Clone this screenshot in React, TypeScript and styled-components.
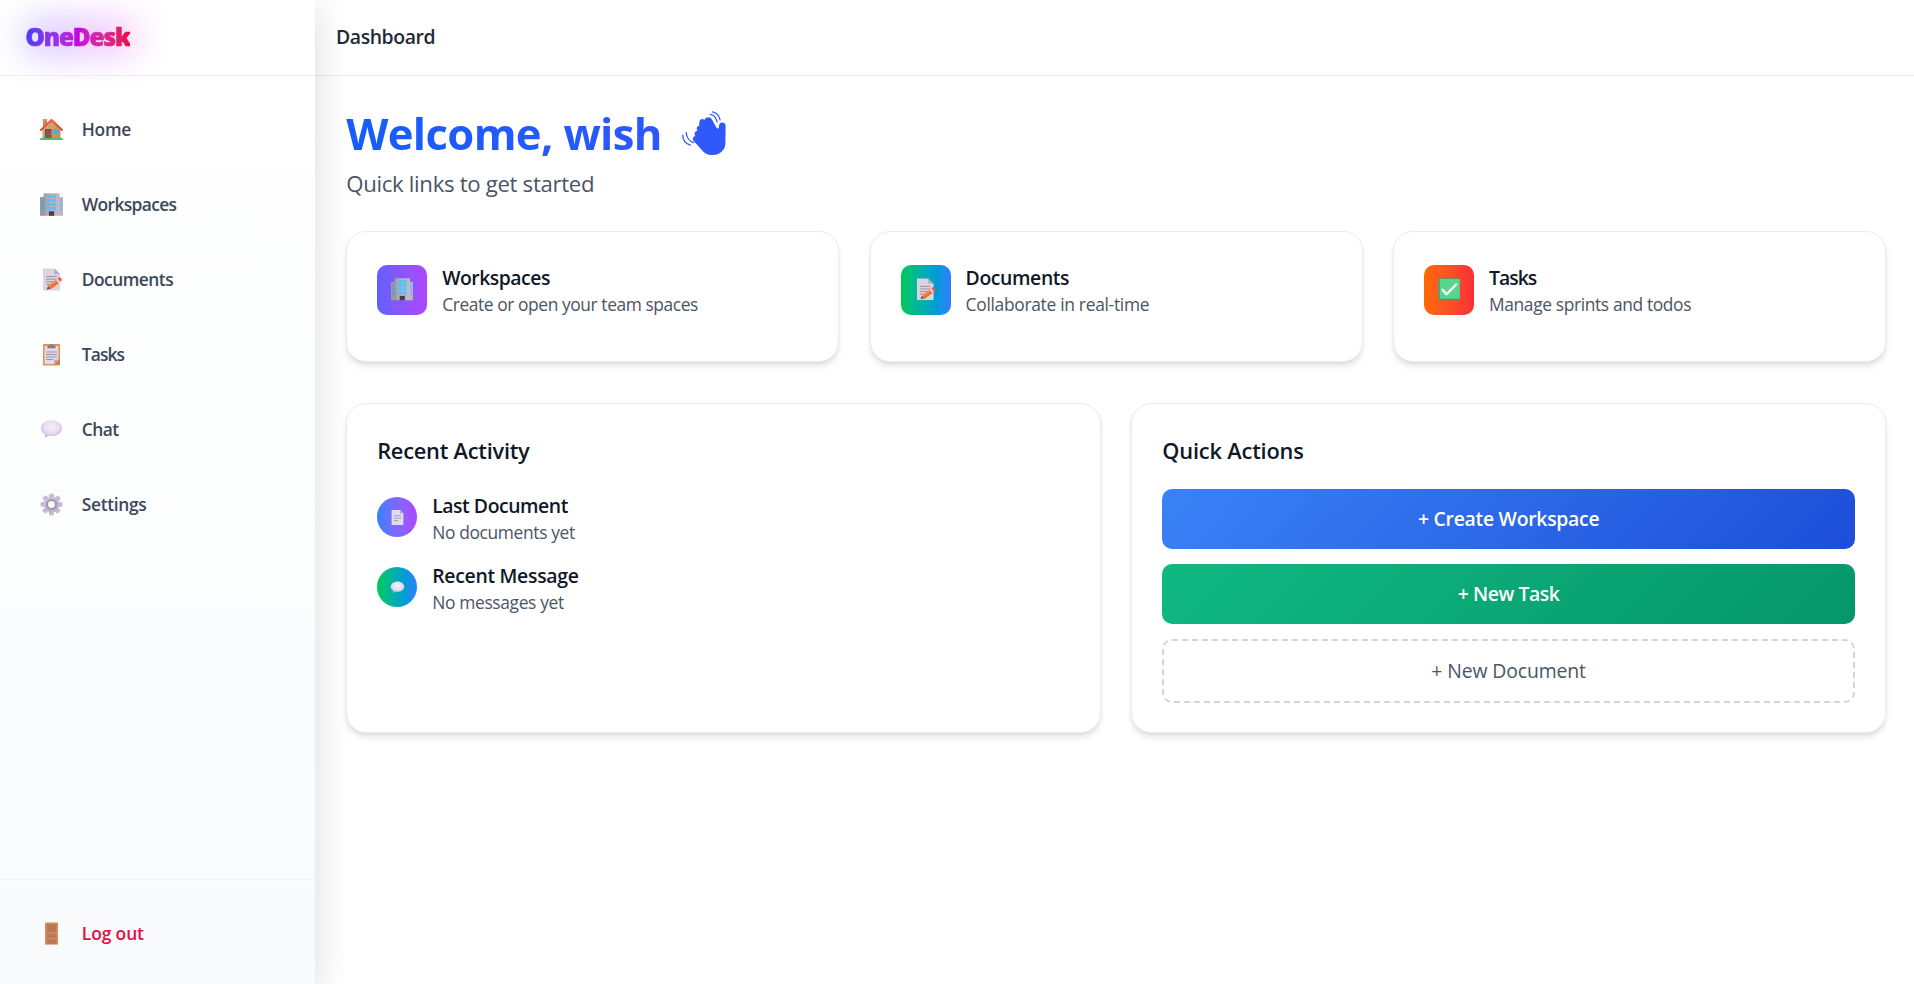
import React from 'react';
import styled, { createGlobalStyle } from 'styled-components';

const GlobalStyle = createGlobalStyle`
  *, *::before, *::after { box-sizing: border-box; }
  html, body { margin: 0; background: #fff; overflow: hidden; }
  body {
    font-family: "Open Sans", "Noto Sans", sans-serif;
    color: #101828;
    -webkit-font-smoothing: antialiased;
  }
  h1, h2, h3, p { margin: 0; }
  button { font-family: inherit; }
`;

/* ---------- layout ---------- */

const Shell = styled.div`
  display: flex;
  height: 984px;
  background: #fff;
`;

const Sidebar = styled.aside`
  position: relative;
  z-index: 2;
  display: flex;
  flex-direction: column;
  flex: 0 0 315px;
  background: linear-gradient(180deg, #ffffff 0%, #fcfdfd 50%, #f8fafc 100%);
  box-shadow: 0 8px 34px rgba(0, 0, 0, 0.15);
`;

const Brand = styled.div`
  display: flex;
  align-items: center;
  height: 76px;
  padding: 0 0 2px 25.5px;
  border-bottom: 1px solid #f0f1f3;
`;

const Logo = styled.div`
  position: relative;
  isolation: isolate;

  &::before {
    content: '';
    position: absolute;
    z-index: -1;
    inset: -2px -10px -2px -4px;
    border-radius: 20px;
    background: linear-gradient(90deg, #6d5cff, #a65cff 45%, #e85cf5 85%, #ff5cd8);
    filter: blur(17px);
    opacity: 0.32;
  }
`;

const LogoText = styled.span`
  display: block;
  font-size: 24.3px;
  font-weight: 800;
  line-height: 34px;
  letter-spacing: -1.1px;
  color: transparent;
  -webkit-text-stroke: 0.7px transparent;
  background: linear-gradient(to right in oklab, #4f39f6, #c800de 50%, #ec003f);
  background-clip: text;
  -webkit-background-clip: text;
`;

const Nav = styled.nav`
  display: flex;
  flex: 1;
  flex-direction: column;
  gap: 15px;
  padding-top: 23.2px;
`;

const NavItem = styled.a<{ $track: number; $danger?: boolean }>`
  display: flex;
  align-items: center;
  gap: 16.3px;
  height: 60px;
  padding-left: 37.5px;
  font-size: 17.4px;
  font-weight: 590;
  letter-spacing: ${(p) => p.$track}px;
  color: ${(p) => (p.$danger ? '#e60a45' : '#3c475a')};
`;

const NavIcon = styled.span`
  display: flex;
  justify-content: center;
  width: 28px;
`;

const SidebarFooter = styled.div`
  height: 105px;
  padding-top: 23px;
  border-top: 1px solid #f0f1f3;
`;

const Main = styled.div`
  display: flex;
  flex: 1;
  flex-direction: column;
  min-width: 0;
`;

const Topbar = styled.header`
  display: flex;
  align-items: center;
  height: 76px;
  padding: 0 0 2px 21px;
  border-bottom: 1px solid #e8eaed;
  font-size: 19.4px;
  font-weight: 570;
  letter-spacing: -0.4px;
  color: #1e2939;
`;

const Content = styled.main`
  padding: 30px 28px 0 31.2px;
`;

const Title = styled.h1`
  display: flex;
  align-items: center;
  gap: 20px;
  height: 54px;
`;

const TitleText = styled.span`
  font-size: 43.65px;
  font-weight: 700;
  line-height: 60px;
  letter-spacing: -0.66px;
  color: transparent;
  background: linear-gradient(to right, #155dfc, #2d57fd);
  background-clip: text;
  -webkit-background-clip: text;
`;

const Subtitle = styled.p`
  margin-top: 8px;
  font-size: 22.2px;
  line-height: 32px;
  letter-spacing: -0.32px;
  color: #4a5565;
`;

const Grid = styled.section<{ $cols: number; $top: number }>`
  display: grid;
  grid-template-columns: repeat(${(p) => p.$cols}, 1fr);
  gap: 30.4px;
  margin-top: ${(p) => p.$top}px;
`;

const Card = styled.article<{ $height: number }>`
  height: ${(p) => p.$height}px;
  padding: 30px;
  border: 1px solid #ececee;
  border-radius: 20px;
  background: #fff;
  box-shadow: 0 5px 7.5px -1.25px rgba(0, 0, 0, 0.1), 0 2.5px 5px -2.5px rgba(0, 0, 0, 0.1);
`;

const MediaRow = styled.div`
  display: flex;
  align-items: center;
  gap: 15px;
  height: 54.5px;
`;

const Tile = styled.div<{ $from: string; $to: string; $round?: boolean }>`
  display: flex;
  align-items: center;
  justify-content: center;
  flex: none;
  width: ${(p) => (p.$round ? 40 : 50)}px;
  height: ${(p) => (p.$round ? 40 : 50)}px;
  border-radius: ${(p) => (p.$round ? '50%' : '10px')};
  background: linear-gradient(to right in oklab, ${(p) => p.$from}, ${(p) => p.$to});
`;

const ItemTitle = styled.h3<{ $track: number }>`
  font-size: 19.4px;
  font-weight: 600;
  line-height: 31px;
  letter-spacing: ${(p) => p.$track}px;
  white-space: nowrap;
`;

const ItemText = styled.p<{ $track: number }>`
  margin-top: -1px;
  font-size: 17.4px;
  line-height: 24.5px;
  letter-spacing: ${(p) => p.$track}px;
  color: #4a5565;
  white-space: nowrap;
`;

const Heading = styled.h2<{ $track: number }>`
  margin-bottom: 20.5px;
  font-size: 21.8px;
  font-weight: 600;
  line-height: 34px;
  letter-spacing: ${(p) => p.$track}px;
`;

const ActivityList = styled.div`
  display: flex;
  flex-direction: column;
  gap: 15.5px;
  padding-top: 1px;
`;

const Actions = styled.div`
  display: flex;
  flex-direction: column;
  gap: 15px;
`;

const ActionButton = styled.button<{ $from: string; $to: string; $track: number }>`
  height: 60px;
  padding: 0;
  border: 0;
  border-radius: 10px;
  background: linear-gradient(135deg, ${(p) => p.$from}, ${(p) => p.$to});
  color: #fff;
  font-size: 19.4px;
  font-weight: 600;
  letter-spacing: ${(p) => p.$track}px;
`;

const OutlineButton = styled.button`
  height: 64px;
  padding: 0;
  border: 2px dashed #d1d5dc;
  border-radius: 10px;
  background: transparent;
  color: #4a5565;
  font-size: 19.4px;
  letter-spacing: -0.12px;
`;

/* ---------- icons ---------- */

type IconProps = { size?: number };

const Svg = ({ size = 23, children }: IconProps & { children: React.ReactNode }) => (
  <svg width={size} height={size} viewBox="0 0 23 23" fill="none" aria-hidden="true">
    {children}
  </svg>
);

const HouseIcon = ({ size }: IconProps) => (
  <Svg size={size}>
    <defs>
      <linearGradient id="wall" x1="0" y1="0" x2="1" y2="1">
        <stop offset="0" stopColor="#e0ab78" />
        <stop offset="1" stopColor="#c48a5c" />
      </linearGradient>
    </defs>
    <rect x="3" y="1.6" width="4" height="8" fill="#c08a60" />
    <rect x="2.7" y="1" width="4.6" height="1.8" rx=".4" fill="#cf9a70" />
    <path d="M2.5 11 11.5 2.6 20.5 11v10h-18z" fill="url(#wall)" />
    <rect x="5" y="11" width="6.4" height="9.2" rx=".5" fill="#7b4b49" />
    <path d="M6 12h4.4v8H6z" fill="#8a5652" />
    <circle cx="9.9" cy="16" r=".5" fill="#e6b04c" />
    <rect x="13.3" y="11" width="5.2" height="5" rx=".4" fill="#35b5f4" />
    <path d="M1 12 11.5 2 22 12" stroke="#e5482f" strokeWidth="1.9" strokeLinecap="round" strokeLinejoin="round" />
    <path d="M3.6 9 11.5 1.8 15 5" stroke="#f4693f" strokeWidth="1.1" strokeLinecap="round" />
    <rect x="0" y="20" width="23" height="2" rx="1" fill="#4dbd74" />
  </Svg>
);

const BuildingIcon = ({ size }: IconProps) => (
  <Svg size={size}>
    <defs>
      <linearGradient id="tower" x1="0" y1="0" x2="1" y2="0">
        <stop offset="0" stopColor="#9a929f" />
        <stop offset=".25" stopColor="#b3abb8" />
        <stop offset="1" stopColor="#c3b9ca" />
      </linearGradient>
    </defs>
    <rect x="0" y="4" width="5" height="18.8" rx=".6" fill="#9d96a3" />
    <rect x="18" y="4" width="5" height="18.8" rx=".6" fill="#bdb3c6" />
    <rect x="3.6" y="0.2" width="16" height="22.6" rx=".8" fill="url(#tower)" />
    {[2, 6, 10, 14].map((y) => (
      <React.Fragment key={y}>
        <rect x="7.2" y={y} width="4" height="2.9" rx=".3" fill="#4cc3fa" />
        <rect x="12.2" y={y} width="3.6" height="2.9" rx=".3" fill="#4cc3fa" />
      </React.Fragment>
    ))}
    {[6.6, 10.4, 14.2].map((y) => (
      <React.Fragment key={y}>
        <rect x="1.4" y={y} width="1.7" height="2.6" rx=".3" fill="#31a9e8" />
        <rect x="20.1" y={y} width="1.7" height="2.6" rx=".3" fill="#4cc3fa" />
      </React.Fragment>
    ))}
    <rect x="8.9" y="18.3" width="5.2" height="4.5" fill="#493d4d" />
  </Svg>
);

const MemoIcon = ({ size }: IconProps) => (
  <Svg size={size}>
    <path d="M3 .4h11.4L20 6v16.4H3z" fill="#dbd2e2" />
    <path d="M14.4.4 20 6h-5.6z" fill="#b5a9bf" />
    <path d="M6 8.6h10.6M6 11.2h10.6M6 13.8h8M6 16.4h4" stroke="#9b91a5" strokeWidth="1" />
    <path d="m6.6 21.8 1.5-4 2.6 3z" fill="#8a4b35" />
    <path d="m8.2 17.7 8.2-6.4 2.8 3.4-8.4 6.4z" fill="#fb8a3c" />
    <path d="m9.4 19.4 8.3-6.4 1.5 1.7-8.4 6.4z" fill="#ec6b30" />
    <path d="m15.8 11.8 1.8-1.4 2.8 3.4-1.8 1.4z" fill="#d8d0e0" />
    <path d="m17.6 10.4.9-.7q1.3-.9 2.5.4t.6 2.2q-.1.5-1.2 1.5z" fill="#f6534d" />
  </Svg>
);

const ClipboardIcon = ({ size }: IconProps) => (
  <Svg size={size}>
    <rect x="3" y="1" width="17" height="21.5" rx=".8" fill="#e1935b" />
    <path d="M4.6 3h13.8v13.8L14 21.1H4.6z" fill="#e3daea" />
    <path d="M18.4 16.8H14v4.3z" fill="#baabc6" />
    <path d="M18.9 16.8 14.2 21.5H20v-4.7z" fill="#d87e43" />
    <path d="M6 9h11M6 11.5h11M6 14h11M6 16.5h7" stroke="#9b91a5" strokeWidth="1" />
    <path d="M7.4 5.3V3.6q0-1 1-1h1.3a1.8 1.8 0 0 1 3.6 0h1.3q1 0 1 1v1.7z" fill="#82798a" />
    <circle cx="11.5" cy="2.4" r=".7" fill="#dca37c" />
  </Svg>
);

const ChatIcon = ({ size }: IconProps) => (
  <Svg size={size}>
    <defs>
      <radialGradient id="bubble" cx=".5" cy=".4" r=".6">
        <stop offset="0" stopColor="#f5effa" />
        <stop offset=".6" stopColor="#e6dcf1" />
        <stop offset="1" stopColor="#c3b0dc" />
      </radialGradient>
    </defs>
    <path
      d="M11.5 2.2C5.7 2.2 1 5.6 1 10.2c0 2.5 1.500 4.500 3.800 5.900.5.400.5 1.900.1 2.800-.2.500.2.800.7.600 1.600-.5 2.500-1.300 3.200-1.700.9.200 1.800.3 2.700.3 5.800 0 10.500-3.400 10.500-7.900S17.300 2.200 11.500 2.200z"
      fill="url(#bubble)"
    />
  </Svg>
);

const GearIcon = ({ size }: IconProps) => (
  <Svg size={size}>
    <defs>
      <linearGradient id="teeth" x1="0" y1="0" x2="1" y2="1">
        <stop offset="0" stopColor="#d3c8de" />
        <stop offset="1" stopColor="#b9aacb" />
      </linearGradient>
    </defs>
    {[0, 45, 90, 135, 180, 225, 270, 315].map((a) => (
      <rect key={a} x="9" y=".4" width="5" height="6" rx="1.9" fill="url(#teeth)" transform={`rotate(${a} 11.5 11.5)`} />
    ))}
    <circle cx="11.5" cy="11.5" r="7.8" fill="url(#teeth)" />
    <circle cx="11.5" cy="11.5" r="4.5" fill="#fbfcfd" stroke="#a198ab" strokeWidth="2.2" />
  </Svg>
);

const DoorIcon = ({ size }: IconProps) => (
  <Svg size={size}>
    <rect x="5" y=".4" width="13" height="22.4" rx=".4" fill="#d98d60" />
    <path d="M6.400 1.800h10.200v20.200H6.400z" fill="#c47c56" />
    <path d="M7.300 2.800h8.400v6.700H7.300zM7.300 12.800h8.400v2.800H7.300zM7.300 17.800h8.400v3.600H7.300z" fill="#b97759" />
    <path d="M6 10.600h11M6 16.700h11" stroke="#d8875b" strokeWidth="1.2" />
    <circle cx="16.3" cy="11" r=".9" fill="#f2a13a" />
    <path d="M5.500 22.400h12v.6h-12z" fill="#e9b9ac" />
  </Svg>
);

const CheckIcon = ({ size }: IconProps) => (
  <Svg size={size}>
    <rect x=".3" y=".3" width="22.4" height="22.4" rx="1.4" fill="#3f9f72" />
    <rect x="1.7" y=".9" width="20.6" height="20.4" rx="1" fill="#58d68d" />
    <path d="m4.500 12 4.200 4.600 9.800-9.900" stroke="#fff" strokeWidth="2.3" strokeLinecap="round" strokeLinejoin="round" />
  </Svg>
);

const PageIcon = ({ size }: IconProps) => (
  <Svg size={size}>
    <path d="M2.500 0h12.700l5.300 5.500V23h-18z" fill="#e4dbef" />
    <path d="M15.200 0l5.300 5.500h-5.300z" fill="#b7a8c9" />
    <path d="M6 8.800h11M6 12.500h11M6 16.200h6.500" stroke="#a294b2" strokeWidth="1.4" />
  </Svg>
);

const WaveIcon = () => (
  <svg width="44" height="44" viewBox="0 0 44 44" fill="none" aria-hidden="true">
    <path
      d="M30.500 44c-4.800 0-7.300-1.500-10.500-4.800l-8.300-9.200c-1.700-2-.7-4.600 1.700-5-1.700-2.300-.6-5 2-5.300-1.500-2.300-.2-4.500 1.900-4.900-.3-1-.3-2 .1-3-.4-2.700 2.500-5 5-2.900 1.300-3.500 5.800-3.600 7.600-.4l4.500 8.300c.7 1.200 2 .9 2.200-.4l.5-2.700c.7-3 6.200-2.800 6.400.8.200 4.500-.2 9-.2 13.500.1 3.400.4 6.800-1.700 10.200C39.300 42 35.300 44 30.500 44z"
      fill="#2f58fd"
    />
    <path d="M28.200 3.400c3 .3 5.800 3.300 7 7.600M30.500.8c3.800.6 6.600 3.600 7.600 8M4.200 21.600c.3 4.600 3.200 8.800 7.600 10M.8 24.200c.2 5 3 8.700 7.600 9.900" stroke="#2f58fd" strokeWidth="1.3" strokeLinecap="round" />
  </svg>
);

/* ---------- data ---------- */

const navItems = [
  { label: 'Home', icon: HouseIcon, track: -0.25 },
  { label: 'Workspaces', icon: BuildingIcon, track: -0.65 },
  { label: 'Documents', icon: MemoIcon, track: -0.53 },
  { label: 'Tasks', icon: ClipboardIcon, track: -0.9 },
  { label: 'Chat', icon: ChatIcon, track: -0.55 },
  { label: 'Settings', icon: GearIcon, track: -0.34 },
];

const links = [
  { title: 'Workspaces', text: 'Create or open your team spaces', icon: BuildingIcon, from: '#615fff', to: '#ad46ff', t: -0.5, s: -0.42 },
  { title: 'Documents', text: 'Collaborate in real-time', icon: MemoIcon, from: '#00c950', to: '#2b7fff', t: -0.39, s: -0.3 },
  { title: 'Tasks', text: 'Manage sprints and todos', icon: CheckIcon, from: '#ff6900', to: '#fb2c36', t: -1, s: -0.37 },
];

const activity = [
  { title: 'Last Document', text: 'No documents yet', icon: PageIcon, from: '#2b7fff', to: '#ad46ff', t: -0.45, s: -0.36 },
  { title: 'Recent Message', text: 'No messages yet', icon: ChatIcon, from: '#00c950', to: '#2b7fff', t: -0.29, s: -0.35 },
];

export default function App() {
  return (
    <>
      <GlobalStyle />
      <Shell>
        <Sidebar>
          <Brand>
            <Logo>
              <LogoText>OneDesk</LogoText>
            </Logo>
          </Brand>
          <Nav>
            {navItems.map(({ label, icon: Icon, track }) => (
              <NavItem key={label} $track={track}>
                <NavIcon>
                  <Icon />
                </NavIcon>
                {label}
              </NavItem>
            ))}
          </Nav>
          <SidebarFooter>
            <NavItem $track={-0.1} $danger>
              <NavIcon>
                <DoorIcon />
              </NavIcon>
              Log out
            </NavItem>
          </SidebarFooter>
        </Sidebar>

        <Main>
          <Topbar>Dashboard</Topbar>
          <Content>
            <Title>
              <TitleText>Welcome, wish</TitleText>
              <WaveIcon />
            </Title>
            <Subtitle>Quick links to get started</Subtitle>

            <Grid $cols={3} $top={31.4}>
              {links.map(({ title, text, icon: Icon, from, to, t, s }) => (
                <Card key={title} $height={131}>
                  <MediaRow>
                    <Tile $from={from} $to={to}>
                      <Icon size={22.5} />
                    </Tile>
                    <div>
                      <ItemTitle $track={t}>{title}</ItemTitle>
                      <ItemText $track={s}>{text}</ItemText>
                    </div>
                  </MediaRow>
                </Card>
              ))}
            </Grid>

            <Grid $cols={2} $top={41}>
              <Card $height={330}>
                <Heading $track={-0.24}>Recent Activity</Heading>
                <ActivityList>
                  {activity.map(({ title, text, icon: Icon, from, to, t, s }) => (
                    <MediaRow key={title}>
                      <Tile $from={from} $to={to} $round>
                        <Icon size={15} />
                      </Tile>
                      <div>
                        <ItemTitle $track={t}>{title}</ItemTitle>
                        <ItemText $track={s}>{text}</ItemText>
                      </div>
                    </MediaRow>
                  ))}
                </ActivityList>
              </Card>
              <Card $height={330}>
                <Heading $track={-0.18}>Quick Actions</Heading>
                <Actions>
                  <ActionButton $from="#3b82f6" $to="#1d4ed8" $track={-0.27}>
                    + Create Workspace
                  </ActionButton>
                  <ActionButton $from="#10b981" $to="#059669" $track={-0.45}>
                    + New Task
                  </ActionButton>
                  <OutlineButton>+ New Document</OutlineButton>
                </Actions>
              </Card>
            </Grid>
          </Content>
        </Main>
      </Shell>
    </>
  );
}
